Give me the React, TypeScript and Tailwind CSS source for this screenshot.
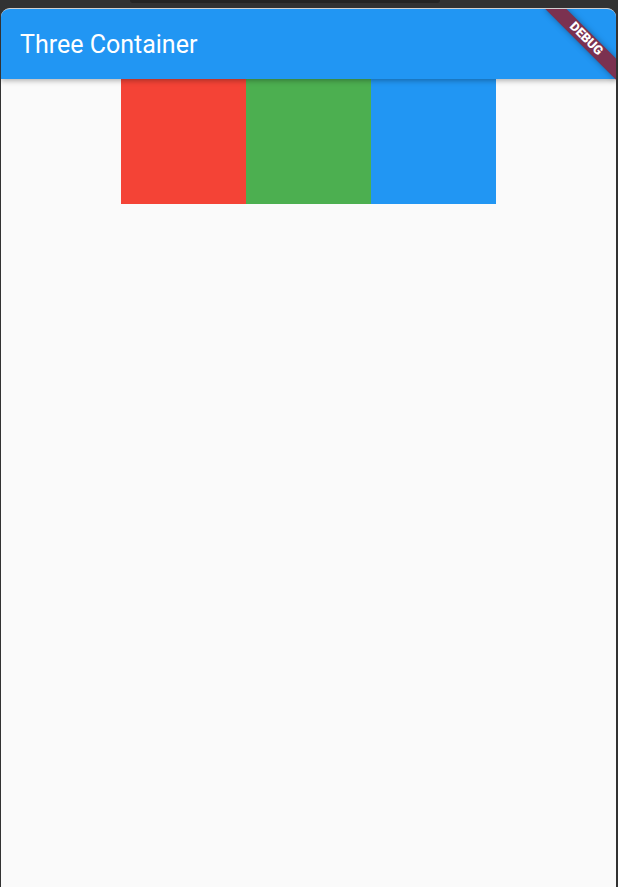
import React from "react";

export default function App() {
  return (
    <div className="w-[618px] h-[887px] bg-[#323232] flex flex-col overflow-hidden" style={{ fontFamily: "Roboto, 'Noto Sans', sans-serif" }}>
      <div className="h-[8px] shrink-0 pl-[130px]">
        <div className="w-[310px] h-[3px] rounded-b-[3px] bg-[#242424]" />
      </div>
      <div className="flex-1 pl-[1px] pr-[2px] flex flex-col min-h-0">
        <div className="relative flex-1 flex flex-col rounded-t-[9px] overflow-hidden bg-[#fafafa] border-t border-[#d0d0d0]">
          <div className="relative z-10 h-[70px] shrink-0 bg-[#2196F3] flex items-center pl-[19px] shadow-[0_2px_5px_rgba(0,0,0,0.28)]">
            <span className="text-white text-[25px] leading-none">Three Container</span>
          </div>
          <div className="flex justify-center">
            <div className="w-[125px] h-[125px] bg-[#F44336]" />
            <div className="w-[125px] h-[125px] bg-[#4CAF50]" />
            <div className="w-[125px] h-[125px] bg-[#2196F3]" />
          </div>
          <div className="absolute right-0 top-0 w-0 h-0 z-20 rotate-45 origin-top-left">
            <div className="absolute left-[-50px] top-[35px] w-[100px] h-[15px] bg-[#7b3150] shadow-[0_0_6px_rgba(0,0,0,0.35)] flex items-center justify-center">
              <span className="text-white text-[12.75px] leading-none font-black" style={{ fontFamily: "Roboto, sans-serif" }}>DEBUG</span>
            </div>
          </div>
        </div>
      </div>
    </div>
  );
}
